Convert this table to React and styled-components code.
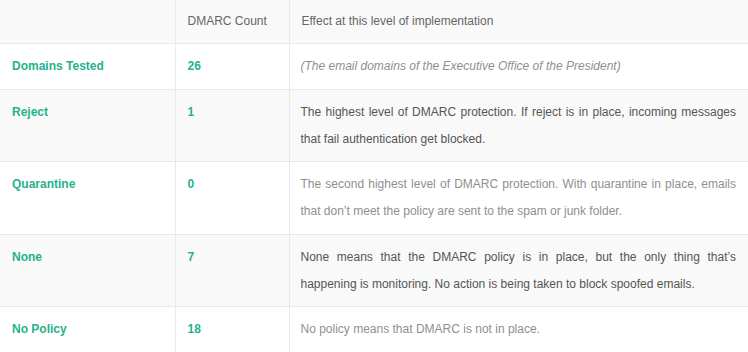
import React from "react";
import styled, { createGlobalStyle } from "styled-components";

const Global = createGlobalStyle`
  html, body { margin: 0; padding: 0; background: #ffffff; }
  body { font-family: "Liberation Sans", Arial, sans-serif; }
`;

const Table = styled.table`
  width: 748px;
  border-collapse: collapse;
  table-layout: fixed;
  font-size: 12px;
`;

const Col = styled.col`
  width: ${(p) => p.$w}px;
`;

const Row = styled.tr`
  background: ${(p) => (p.$shaded ? "#f9f9f9" : "#ffffff")};
`;

const HeadCell = styled.th`
  text-align: left;
  font-weight: normal;
  color: #666666;
  line-height: 27px;
  padding: 8px 12px 8px 12px;
  border: 1px solid #e9e9e9;
  border-top: none;
  border-left: ${(p) => (p.$first ? "none" : "1px solid #e9e9e9")};
  vertical-align: top;
`;

const LabelCell = styled.td`
  color: #25b28c;
  font-weight: bold;
  line-height: 27px;
  padding: 9px 12px 8.5px;
  border: 1px solid #e9e9e9;
  border-left: none;
  vertical-align: top;
`;

const CountCell = styled.td`
  color: #25b28c;
  font-weight: bold;
  line-height: 27px;
  padding: 9px 12px 8.5px;
  border: 1px solid #e9e9e9;
  vertical-align: top;
`;

const EffectCell = styled.td`
  color: ${(p) => (p.$dark ? "#555555" : "#8f8f8f")};
  font-style: ${(p) => (p.$italic ? "italic" : "normal")};
  line-height: 27px;
  padding: 9px 12px 8.5px 11px;
  border: 1px solid #e9e9e9;
  border-right: none;
  text-align: justify;
  vertical-align: top;
`;

const rows = [
  { label: "Domains Tested", count: "26", text: "(The email domains of the Executive Office of the President)", italic: true, dark: false, shaded: false },
  { label: "Reject", count: "1", text: "The highest level of DMARC protection. If reject is in place, incoming messages that fail authentication get blocked.", dark: true, shaded: true },
  { label: "Quarantine", count: "0", text: "The second highest level of DMARC protection. With quarantine in place, emails that don\u2019t meet the policy are sent to the spam or junk folder.", dark: false, shaded: false },
  { label: "None", count: "7", text: "None means that the DMARC policy is in place, but the only thing that\u2019s happening is monitoring. No action is being taken to block spoofed emails.", dark: true, shaded: true },
  { label: "No Policy", count: "18", text: "No policy means that DMARC is not in place.", dark: false, shaded: false },
];

export default function App() {
  return (
    <>
      <Global />
      <Table>
        <colgroup>
          <Col $w={175} />
          <Col $w={114} />
          <Col $w={459} />
        </colgroup>
        <thead>
          <Row $shaded>
            <HeadCell $first></HeadCell>
            <HeadCell>DMARC Count</HeadCell>
            <HeadCell>Effect at this level of implementation</HeadCell>
          </Row>
        </thead>
        <tbody>
          {rows.map((r) => (
            <Row key={r.label} $shaded={r.shaded}>
              <LabelCell>{r.label}</LabelCell>
              <CountCell>{r.count}</CountCell>
              <EffectCell $dark={r.dark} $italic={r.italic}>{r.text}</EffectCell>
            </Row>
          ))}
        </tbody>
      </Table>
    </>
  );
}
